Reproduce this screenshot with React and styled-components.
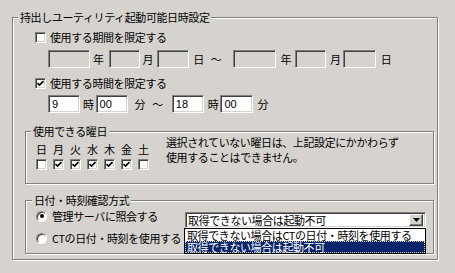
import React from 'react'
import styled, { createGlobalStyle } from 'styled-components'

const BG = '#d6d3ce'

const GlobalStyle = createGlobalStyle`
  html, body {
    margin: 0;
    padding: 0;
    background: ${BG};
  }
  body {
    font-family: "Noto Sans CJK JP", "Noto Sans", sans-serif;
    font-size: 11px;
    letter-spacing: -0.4px;
    color: #000;
  }
`

const Screen = styled.div`
  width: 455px;
  height: 273px;
  box-sizing: border-box;
  padding: 17px 0 0 12px;
  background: ${BG};
  overflow: hidden;
`

const Group = styled.div`
  position: relative;
  box-sizing: border-box;
  width: ${(p) => p.$w}px;
  height: ${(p) => p.$h}px;
  margin-top: ${(p) => p.$mt || 0}px;
  border: 1px solid #808080;
  box-shadow: 1px 1px 0 #fff, inset 1px 1px 0 #fff;
  padding: ${(p) => p.$pad || '0'};
`

const Legend = styled.span`
  position: absolute;
  top: -8px;
  left: ${(p) => p.$left}px;
  padding: 0 2px;
  background: ${BG};
  line-height: 15px;
  white-space: nowrap;
`

const Row = styled.div`
  display: flex;
  align-items: center;
  height: ${(p) => p.$h || 13}px;
  margin-top: ${(p) => p.$mt || 0}px;
  margin-left: ${(p) => p.$ml || 0}px;
  line-height: 13px;
  white-space: nowrap;
`

const Box = styled.span`
  position: relative;
  display: inline-block;
  flex: none;
  box-sizing: border-box;
  width: 11px;
  height: 11px;
  background: #fff;
  border: 1px solid;
  border-color: #808080 #fff #fff #808080;
  box-shadow: inset 1px 1px 0 #404040, inset -1px -1px 0 ${BG};
  margin-right: ${(p) => p.$mr || 0}px;

  svg {
    position: absolute;
    left: 1px;
    top: 1px;
  }
`

const Radio = styled.span`
  position: relative;
  display: inline-block;
  flex: none;
  box-sizing: border-box;
  width: 11px;
  height: 11px;
  border-radius: 50%;
  background: #fff;
  border: 1px solid;
  border-color: #808080 #fff #fff #808080;
  box-shadow: inset 1px 1px 0 #404040;
  margin-right: 5px;

  &::after {
    content: '';
    display: ${(p) => (p.$on ? 'block' : 'none')};
    position: absolute;
    left: 2.5px;
    top: 2.5px;
    width: 4px;
    height: 4px;
    border-radius: 50%;
    background: #000;
  }
`

const Field = styled.span`
  display: inline-flex;
  align-items: center;
  flex: none;
  box-sizing: border-box;
  width: ${(p) => p.$w}px;
  height: 18px;
  margin-left: ${(p) => p.$ml || 0}px;
  padding-left: 3px;
  background: ${(p) => (p.$disabled ? BG : '#fff')};
  border: 1px solid;
  border-color: #808080 #fff #fff #808080;
  box-shadow: inset 1px 1px 0 #404040, inset -1px -1px 0 ${BG};
  font-family: "Liberation Sans", sans-serif;
  font-size: 11px;
  letter-spacing: 0;
`

const Unit = styled.span`
  flex: none;
  margin-left: ${(p) => p.$ml || 0}px;
`

const DaysGrid = styled.div`
  display: grid;
  grid-template-columns: repeat(7, 11px);
  column-gap: 6px;
  row-gap: 3px;
  justify-items: center;
  line-height: 14px;
`

const DayLabel = styled.span`
  letter-spacing: 0;
`

const Note = styled.div`
  margin: -7px 0 0 17px;
  line-height: 15px;
`

const DayContent = styled.div`
  display: flex;
  align-items: flex-start;
  padding: 10px 0 0 10px;
`

const MethodRow = styled.div`
  display: flex;
  align-items: flex-start;
  margin-top: ${(p) => p.$mt || 0}px;
`

const RadioLabel = styled.label`
  display: flex;
  align-items: center;
  width: ${(p) => p.$w || 'auto'};
  height: 12px;
  line-height: 12px;
  white-space: nowrap;
`

const SelectWrap = styled.div`
  position: relative;
  margin-top: 2px;
`

const Select = styled.div`
  display: flex;
  align-items: center;
  box-sizing: border-box;
  width: 241px;
  height: 16px;
  padding-left: 2px;
  background: #fff;
  border: 1px solid;
  border-color: #808080 #fff #fff #808080;
  box-shadow: inset 1px 1px 0 #404040, inset -1px -1px 0 ${BG};
  line-height: 14px;
  white-space: nowrap;
`

const SelectText = styled.span`
  flex: 1;
`

const DropButton = styled.span`
  display: flex;
  align-items: center;
  justify-content: center;
  box-sizing: border-box;
  width: 14px;
  height: 12px;
  margin-right: 2px;
  background: ${BG};
  border: 1px solid;
  border-color: #fff #404040 #404040 #fff;
  box-shadow: inset -1px -1px 0 #808080;
`

const DropList = styled.div`
  position: absolute;
  left: -1px;
  top: 16px;
  box-sizing: border-box;
  width: 242px;
  border: 1px solid #000;
  background: #fff;
  z-index: 2;
`

const DropItem = styled.div`
  height: 12px;
  line-height: 12px;
  padding-left: 2px;
  white-space: nowrap;
  background: ${(p) => (p.$active ? '#0a246a' : '#fff')};
  color: ${(p) => (p.$active ? '#fff' : '#000')};
  outline: ${(p) => (p.$active ? '1px dotted #d8d8b0' : 'none')};
  outline-offset: -1px;
`

function Check({ on, mr }) {
  return (
    <Box $mr={mr}>
      {on && (
        <svg width="7" height="7" viewBox="0 0 7 7">
          <path d="M0.5 3 L2.5 5 L6.5 1" fill="none" stroke="#000" strokeWidth="1.7" />
        </svg>
      )}
    </Box>
  )
}

const days = [
  ['日', false],
  ['月', true],
  ['火', true],
  ['水', true],
  ['木', true],
  ['金', true],
  ['土', false],
]

export default function App() {
  return (
    <>
      <GlobalStyle />
      <Screen>
        <Group $w={426} $h={243} $pad="0 0 0 12px">
          <Legend $left={5}>持出しユーティリティ起動可能日時設定</Legend>

          <Row $mt={13} $ml={10}>
            <Check mr={4} />
            使用する期間を限定する
          </Row>

          <Row $h={18} $mt={6} $ml={23}>
            <Field $w={42} $disabled />
            <Unit $ml={3}>年</Unit>
            <Field $w={31} $ml={5} $disabled />
            <Unit $ml={3}>月</Unit>
            <Field $w={32} $ml={4} $disabled />
            <Unit $ml={4}>日</Unit>
            <Unit $ml={7}>～</Unit>
            <Field $w={43} $ml={12} $disabled />
            <Unit $ml={4}>年</Unit>
            <Field $w={31} $ml={4} $disabled />
            <Unit $ml={4}>月</Unit>
            <Field $w={33} $ml={2} $disabled />
            <Unit $ml={5}>日</Unit>
          </Row>

          <Row $mt={9} $ml={10}>
            <Check on mr={4} />
            使用する時間を限定する
          </Row>

          <Row $h={18} $mt={5} $ml={23}>
            <Field $w={32}>9</Field>
            <Unit $ml={3}>時</Unit>
            <Field $w={32} $ml={2}>00</Field>
            <Unit $ml={7}>分</Unit>
            <Unit $ml={7}>～</Unit>
            <Field $w={32} $ml={9}>18</Field>
            <Unit $ml={4}>時</Unit>
            <Field $w={33} $ml={2}>00</Field>
            <Unit $ml={4}>分</Unit>
          </Row>

          <Group $w={409} $h={53} $mt={18}>
            <Legend $left={5}>使用できる曜日</Legend>
            <DayContent>
              <DaysGrid>
                {days.map(([d]) => (
                  <DayLabel key={d}>{d}</DayLabel>
                ))}
                {days.map(([d, on]) => (
                  <Check key={d + 'c'} on={on} />
                ))}
              </DaysGrid>
              <Note>
                選択されていない曜日は、上記設定にかかわらず
                <br />
                使用することはできません。
              </Note>
            </DayContent>
          </Group>

          <Group $w={409} $h={54} $mt={16} $pad="9px 0 0 10px">
            <Legend $left={6}>日付・時刻確認方式</Legend>
            <MethodRow>
              <RadioLabel $w="149px">
                <Radio $on />
                管理サーバに照会する
              </RadioLabel>
              <SelectWrap>
                <Select>
                  <SelectText>取得できない場合は起動不可</SelectText>
                  <DropButton>
                    <svg width="7" height="4" viewBox="0 0 7 4">
                      <path d="M0 0 H7 L3.5 4 Z" fill="#000" />
                    </svg>
                  </DropButton>
                </Select>
                <DropList>
                  <DropItem>取得できない場合はCTの日付・時刻を使用する</DropItem>
                  <DropItem $active>取得できない場合は起動不可</DropItem>
                </DropList>
              </SelectWrap>
            </MethodRow>
            <MethodRow $mt={4}>
              <RadioLabel>
                <Radio />
                CTの日付・時刻を使用する
              </RadioLabel>
            </MethodRow>
          </Group>
        </Group>
      </Screen>
    </>
  )
}
